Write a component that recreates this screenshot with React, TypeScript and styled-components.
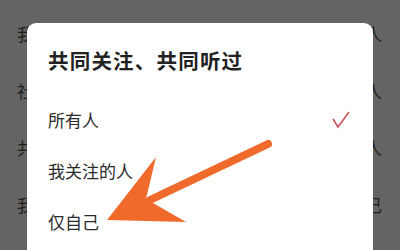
import styled, { createGlobalStyle } from "styled-components";

const Global = createGlobalStyle`
  html, body { margin: 0; padding: 0; }
  body {
    width: 400px;
    height: 250px;
    overflow: hidden;
    background: #646464;
    font-family: "Noto Sans CJK SC", "Noto Sans", sans-serif;
  }
`;

const Screen = styled.div`
  position: relative;
  width: 400px;
  height: 250px;
  overflow: hidden;
  background: #646464;
`;

const BackList = styled.div`
  display: flex;
  flex-direction: column;
  padding: 5px 18px 0 17px;
`;

const BackRow = styled.div`
  height: 57px;
  display: flex;
  align-items: center;
  justify-content: space-between;
  font-size: 17px;
  color: #1e1e1e;
`;

// dialog sits over the list
const Dialog = styled.div`
  position: absolute;
  left: 27px;
  top: 23px;
  width: 346px;
  height: 260px;
  background: #fff;
  border-radius: 9px;
  padding: 25px 23px 0 21px;
  box-sizing: border-box;
`;

const Title = styled.div`
  font-size: 20.5px;
  line-height: 24px;
  font-weight: 700;
  color: #222;
  letter-spacing: 1.2px;
`;

const Options = styled.div`
  margin-top: 22px;
  display: flex;
  flex-direction: column;
`;

const Option = styled.div`
  height: 51px;
  display: flex;
  align-items: center;
  justify-content: space-between;
  font-size: 17px;
  color: #2a2a2a;
`;

const Check = () => (
  <svg width="18" height="18" viewBox="0 0 18 18">
    <path d="M1 8 L6 16 L17 1" fill="none" stroke="#c9555a" strokeWidth="1.6" />
  </svg>
);

const Arrow = styled.svg`
  position: absolute;
  left: 0;
  top: 0;
  pointer-events: none;
`;

const back = [
  ["我的主页", "所有人"],
  ["社区动态", "所有人"],
  ["共同关注", "所有人"],
  ["我的听歌排行", "仅自己"],
  ["我的收藏", "所有人"],
];

const options = ["所有人", "我关注的人", "仅自己"];

export default function App() {
  return (
    <Screen>
      <Global />
      <BackList>
        {back.map(([l, r]) => (
          <BackRow key={l}>
            <span>{l}</span>
            <span>{r}</span>
          </BackRow>
        ))}
      </BackList>
      <Dialog>
        <Title>共同关注、共同听过</Title>
        <Options>
          {options.map((o, i) => (
            <Option key={o}>
              <span>{o}</span>
              {i === 0 && <Check />}
            </Option>
          ))}
        </Options>
      </Dialog>
      <Arrow width="400" height="250" viewBox="0 0 400 250">
        <line x1="268" y1="144" x2="150" y2="200" stroke="#f06a2c" strokeWidth="8" strokeLinecap="round" />
        <polygon points="107,220 156,157 146,199 186,222" fill="#f06a2c" />
      </Arrow>
    </Screen>
  );
}
